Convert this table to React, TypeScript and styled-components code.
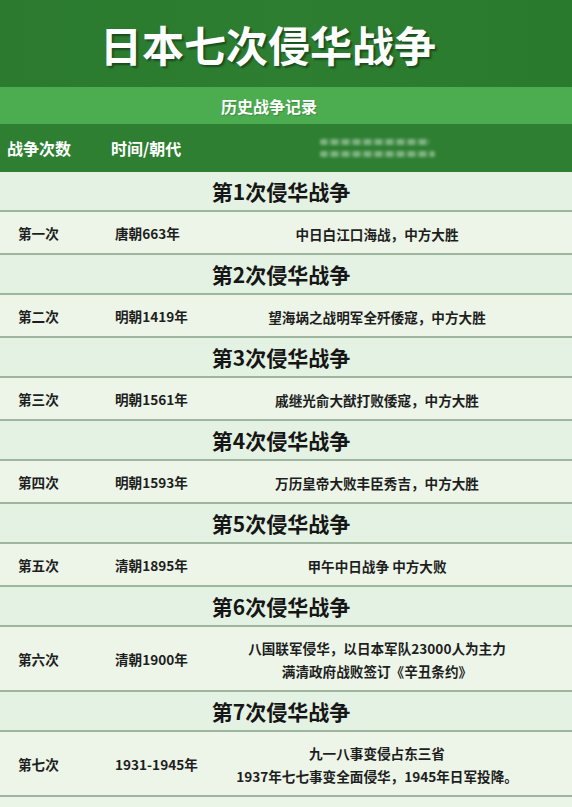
import React from "react";
import styled, { createGlobalStyle } from "styled-components";

const GlobalStyle = createGlobalStyle`
  html, body {
    margin: 0;
    padding: 0;
    background: #ebf5e7;
  }
  body {
    width: 572px;
    height: 807px;
    overflow: hidden;
    font-family: "Noto Sans CJK SC", "Noto Sans", sans-serif;
  }
`;

const Page = styled.div`
  width: 572px;
  display: flex;
  flex-direction: column;
`;

const TitleBar = styled.header`
  height: 87px;
  display: flex;
  align-items: center;
  justify-content: center;
  padding-right: 36px;
  box-sizing: border-box;
  background: linear-gradient(90deg, #2b7a2f 0%, #2d7e31 50%, #2a7a2e 100%);
`;

const Title = styled.h1`
  margin: 0;
  font-size: 42px;
  line-height: 1;
  font-weight: 700;
  color: #ffffff;
  letter-spacing: 0;
  text-shadow: 2px 2px 2px rgba(0, 0, 0, 0.4);
`;

const SubBar = styled.div`
  height: 37px;
  display: flex;
  align-items: center;
  justify-content: center;
  padding-right: 34px;
  box-sizing: border-box;
  background: #4cad50;
  color: #ffffff;
  font-size: 16px;
  font-weight: 700;
  text-shadow: 1px 1px 1px rgba(0, 0, 0, 0.2);
`;

const ColumnHeader = styled.div`
  height: 48px;
  display: grid;
  grid-template-columns: 104px 209px auto;
  align-items: center;
  padding-left: 7px;
  background: #2e7f32;
  color: #ffffff;
  font-size: 16px;
  font-weight: 700;
`;

const Smudge = styled.div`
  display: flex;
  flex-direction: column;
  gap: 6px;
  filter: blur(1.8px);
`;

const SmudgeLine = styled.div<{ $w: number }>`
  width: ${(p) => p.$w}px;
  height: 6px;
  border-radius: 2px;
  background: repeating-linear-gradient(
    90deg,
    rgba(215, 232, 215, 0.5) 0 7px,
    rgba(215, 232, 215, 0.15) 7px 11px
  );
`;

const SectionTitle = styled.div`
  height: 38px;
  display: flex;
  align-items: center;
  justify-content: center;
  padding-right: 10px;
  background: #e4f2e3;
  border-bottom: 2px solid #9fb69e;
  color: #161616;
  font-size: 21px;
  font-weight: 700;
`;

const Row = styled.div<{ $double?: boolean }>`
  height: ${(p) => (p.$double ? 63 : 41)}px;
  display: grid;
  grid-template-columns: 115px 85px 1fr;
  align-items: center;
  padding-right: 18px;
  background: #ecf5e8;
  border-bottom: 2px solid #9fb69e;
  color: #1e1e1e;
  font-size: 13.6px;
  font-weight: 700;
`;

const Ordinal = styled.span`
  padding-left: 18px;
`;

const Era = styled.span`
  white-space: nowrap;
`;

const Desc = styled.div`
  text-align: center;
  line-height: 23px;
  white-space: nowrap;
  padding-top: 3px;
`;

type War = {
  n: number;
  ordinal: string;
  era: string;
  desc: string[];
};

const wars: War[] = [
  { n: 1, ordinal: "第一次", era: "唐朝663年", desc: ["中日白江口海战，中方大胜"] },
  { n: 2, ordinal: "第二次", era: "明朝1419年", desc: ["望海埚之战明军全歼倭寇，中方大胜"] },
  { n: 3, ordinal: "第三次", era: "明朝1561年", desc: ["戚继光俞大猷打败倭寇，中方大胜"] },
  { n: 4, ordinal: "第四次", era: "明朝1593年", desc: ["万历皇帝大败丰臣秀吉，中方大胜"] },
  { n: 5, ordinal: "第五次", era: "清朝1895年", desc: ["甲午中日战争 中方大败"] },
  {
    n: 6,
    ordinal: "第六次",
    era: "清朝1900年",
    desc: ["八国联军侵华，以日本军队23000人为主力", "满清政府战败签订《辛丑条约》"],
  },
  {
    n: 7,
    ordinal: "第七次",
    era: "1931-1945年",
    desc: ["九一八事变侵占东三省", "1937年七七事变全面侵华，1945年日军投降。"],
  },
];

export default function App() {
  return (
    <>
      <GlobalStyle />
      <Page>
        <TitleBar>
          <Title>日本七次侵华战争</Title>
        </TitleBar>
        <SubBar>历史战争记录</SubBar>
        <ColumnHeader>
          <span>战争次数</span>
          <span>时间/朝代</span>
          <Smudge aria-hidden="true">
            <SmudgeLine $w={110} />
            <SmudgeLine $w={115} />
          </Smudge>
        </ColumnHeader>
        {wars.map((w) => (
          <React.Fragment key={w.n}>
            <SectionTitle>{`第${w.n}次侵华战争`}</SectionTitle>
            <Row $double={w.desc.length > 1}>
              <Ordinal>{w.ordinal}</Ordinal>
              <Era>{w.era}</Era>
              <Desc>
                {w.desc.map((line) => (
                  <div key={line}>{line}</div>
                ))}
              </Desc>
            </Row>
          </React.Fragment>
        ))}
      </Page>
    </>
  );
}
